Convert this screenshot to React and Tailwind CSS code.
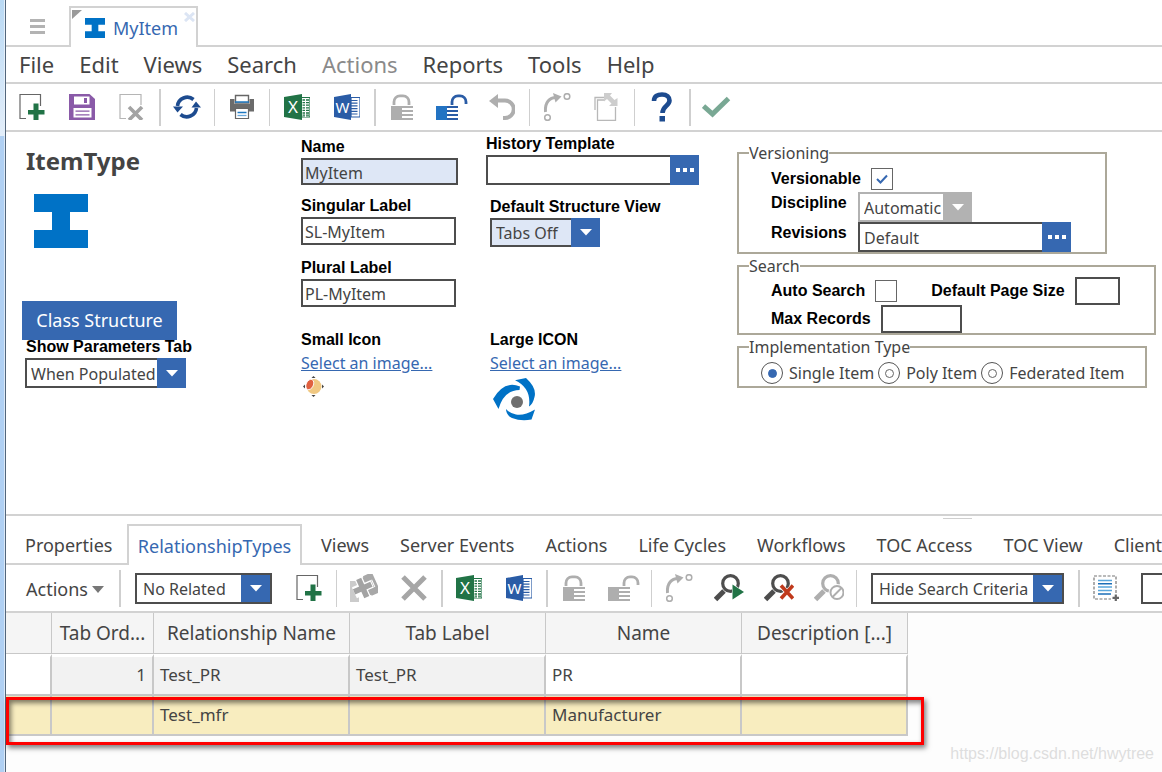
import React from "react";

const GREY = "#aeaeae";

function Svg({ children, className = "size-[26px]", box = "0 0 26 26" }) {
  return (
    <svg viewBox={box} className={className} fill="none" aria-hidden="true">
      {children}
    </svg>
  );
}

const NewIcon = () => (
  <Svg>
    <path d="M7 24.5H1V.5H21.500V12" stroke="#666" strokeWidth="1.200" />
    <path d="M13.500 11.500H18.500V18H24.500V22.500H18.500V28H13.500V22.500H8V18H13.500Z" fill="#217346" transform="translate(1 -2)" />
  </Svg>
);

const SaveIcon = () => (
  <Svg>
    <path d="M0 0H20.500L26 5V26H0Z" fill="#8a5aa8" />
    <path d="M5 2.500H20.500V10.500H5Z" fill="#fff" />
    <path d="M15 4H18V9H15Z" fill="#8a5aa8" />
    <path d="M4.500 14H22.500V23.500H4.500Z" fill="#fff" />
    <path d="M6.500 17.200H20.500M6.500 20.800H20.500" stroke="#8a5aa8" strokeWidth="1.200" />
  </Svg>
);

const DeleteIcon = () => (
  <Svg>
    <path d="M7 24.500H1V.5H22V11" stroke="#b5b5b5" strokeWidth="1.200" />
    <path d="M10 13L23 26M23 13L10 26" stroke="#a3a3a3" strokeWidth="3.600" />
  </Svg>
);

const RefreshIcon = () => (
  <Svg className="size-[28px]" box="0 0 28 28">
    <path d="M4.500 13A9.800 9.800 0 0 1 20.500 6.500M23.500 15A9.800 9.800 0 0 1 7.500 21.500" stroke="#1d4b8f" strokeWidth="3.600" />
    <path d="M0 13.500H10L4.500 19.500ZM18.500 14.500H28L23 8.500Z" fill="#1d4b8f" />
  </Svg>
);

const PrintIcon = () => (
  <Svg>
    <path d="M6.500 1.500H19.500V9H6.500Z" fill="#fff" stroke="#666" strokeWidth="1.400" />
    <path d="M1 5H5.500V10H20.500V5H25V17.500H20V14.500H6V17.500H1Z" fill="#6b6b6b" />
    <path d="M6 8H20" stroke="#1d77c0" strokeWidth="1.500" />
    <path d="M6.500 14.500H19.500V24.500H6.500Z" fill="#fff" stroke="#666" strokeWidth="1.200" />
    <path d="M8.500 18.500H17.500" stroke="#1d77c0" strokeWidth="1.500" />
    <path d="M8.500 21.500H17.500" stroke="#6aa9dc" strokeWidth="1.300" />
  </Svg>
);

const ExcelIcon = () => (
  <Svg>
    <path d="M17 3.500H26V23H17Z" fill="#fff" stroke="#217346" strokeWidth="1.200" />
    <path d="M18.500 6H25M18.500 8.600H25M18.500 11.200H25M18.500 13.800H25M18.500 16.400H25M18.500 19H25M18.500 21.200H25" stroke="#217346" strokeWidth="1.300" />
    <path d="M21.500 4V23" stroke="#fff" strokeWidth="1" />
    <path d="M0 3L18 0V26L0 23Z" fill="#217346" />
    <text x="9" y="19" textAnchor="middle" fontFamily="Noto Sans, sans-serif" fontSize="17" fill="#fff">X</text>
  </Svg>
);

const WordIcon = () => (
  <Svg>
    <path d="M17 3.500H26V23H17Z" fill="#fff" stroke="#2a5ca6" strokeWidth="1.200" />
    <path d="M17 6.500H23.500M17 9.200H23.500M17 11.900H23.500M17 14.600H23.500M17 17.300H23.500M17 20H23.500" stroke="#2a5ca6" strokeWidth="1.200" />
    <path d="M0 3L17 0V26L0 23Z" fill="#2a5ca6" />
    <text x="8.500" y="18.500" textAnchor="middle" fontFamily="Noto Sans, sans-serif" fontSize="15" fill="#fff">W</text>
  </Svg>
);

const LockIcon = () => (
  <Svg>
    <path d="M5 11V8A6 6 0 0 1 11 1.800H14A6 6 0 0 1 20 8V11" stroke={GREY} strokeWidth="2.800" />
    <path d="M2 12H13V26H2Z" fill={GREY} />
    <path d="M12 13H24M12 17H24M12 21H24M12 25H24" stroke={GREY} strokeWidth="2" />
  </Svg>
);

const UnlockIcon = ({ body = GREY, bar = GREY }) => (
  <Svg className="w-[32px] h-[26px]" box="0 0 32 26">
    <path d="M16 11V8A6 6 0 0 1 22 1.800H24A6 6 0 0 1 30 8V10" stroke={bar} strokeWidth="2.800" />
    <path d="M0 12H11V26H0Z" fill={body} />
    <path d="M11 13H22M11 17H22M11 21H22M11 25H22" stroke={bar} strokeWidth="2" />
  </Svg>
);

const UndoIcon = () => (
  <Svg>
    <path d="M5 6.500H16A8 8 0 0 1 16 24H14" stroke={GREY} strokeWidth="4" />
    <path d="M0 7L9 0V14Z" fill={GREY} />
  </Svg>
);

const PromoteIcon = () => (
  <Svg className="size-[28px]" box="0 0 28 28">
    <path d="M2.500 19C1.500 9 7 4.500 13 4.500" stroke={GREY} strokeWidth="3" />
    <path d="M10 0L18.500 3.500L12.500 9.500Z" fill={GREY} />
    <circle cx="24" cy="3.500" r="2.800" stroke={GREY} strokeWidth="1.500" />
    <circle cx="4.500" cy="24.500" r="2.800" stroke={GREY} strokeWidth="1.500" />
  </Svg>
);

const CopyIcon = () => (
  <Svg className="w-[26px] h-[28px]" box="0 0 26 28">
    <path d="M1 17V4.500H12" stroke="#b8b8b8" strokeWidth="1.300" />
    <path d="M11 7H3.500V27.500H21.500V14" stroke="#b8b8b8" strokeWidth="1.300" />
    <path d="M10 0H18L16 2.500L20.500 7L23.500 5V13H15L17.500 10.500L13 6L10 8.500Z" fill="#cdcdcd" />
  </Svg>
);

const HelpIcon = () => (
  <Svg className="w-[22px] h-[30px]" box="0 0 22 30">
    <path d="M3 9C3 4 6.500 2.500 11 2.500C16 2.500 18.500 5 18.500 8.500C18.500 14 11.500 13.500 11.500 21" stroke="#1d4b8f" strokeWidth="4.600" />
    <path d="M8.500 24H14V29.500H8.500Z" fill="#1d4b8f" />
  </Svg>
);

const CheckIcon = () => (
  <Svg className="w-[30px] h-[24px]" box="0 0 30 24">
    <path d="M1.500 11L10.500 19L26.500 3.500" stroke="#79a894" strokeWidth="5" />
  </Svg>
);

const CrossIcon = () => (
  <Svg>
    <path d="M2 2L24 24M24 2L2 24" stroke="#a6a6a6" strokeWidth="5" />
  </Svg>
);

const PickIcon = () => (
  <Svg className="size-[28px]" box="0 0 28 28">
    <path d="M0 7H9V28H0Z" fill="#cbcbcb" />
    <g transform="rotate(-24 15 13)">
      <path d="M3 8H10V3H26V23H9V20H3Z" fill="#fff" />
      <path d="M15 3.500H26V22.500H15Z" fill="#a8a8a8" />
      <path d="M12.500 2V24M3 13H23" stroke="#fff" strokeWidth="8" />
      <path d="M12.500 3V23M3 13H22" stroke="#a3a3a3" strokeWidth="5.500" />
      <path d="M17.500 3.500H26V22.500H17.500" stroke="#a8a8a8" strokeWidth="2.500" />
      <path d="M24 9V17" stroke="#fff" strokeWidth="1" />
    </g>
  </Svg>
);

const Magnifier = ({ color, children }) => (
  <Svg className="w-[30px] h-[28px]" box="0 0 30 28">
    <path d="M1.500 25.500L10 17" stroke={color} strokeWidth="5" />
    <circle cx="16.500" cy="9.500" r="7.800" stroke={color} strokeWidth="3.200" fill="#fff" />
    {children}
  </Svg>
);

const RunSearchIcon = () => (
  <Magnifier color="#4d4d4d">
    <path d="M18 9L31 18.500L18 27Z" fill="#fff" />
    <path d="M18.500 10.500L30 18L18.500 25.500Z" fill="#217346" />
  </Magnifier>
);

const ClearSearchIcon = () => (
  <Magnifier color="#4d4d4d">
    <path d="M16 11L30 25M30 11L16 25" stroke="#fff" strokeWidth="5" />
    <path d="M17 11.500L29 24.500M29 11.500L17 24.500" stroke="#c0391b" strokeWidth="3.600" />
  </Magnifier>
);

const StopSearchIcon = () => (
  <Magnifier color={GREY}>
    <circle cx="23" cy="18.500" r="8.500" fill="#fff" />
    <circle cx="23" cy="18.500" r="6.500" stroke={GREY} strokeWidth="2" />
    <path d="M18.500 23L27.500 14" stroke={GREY} strokeWidth="2" />
  </Magnifier>
);

const SelectRowsIcon = () => (
  <Svg>
    <path d="M1 1H23V24H1Z" stroke="#777" strokeWidth="1.200" strokeDasharray="3 1.500" />
    <path d="M5 5.500H19M5 12H19M5 15.500H19" stroke="#5aa7dc" strokeWidth="1.600" />
    <path d="M5 8.700H19M5 19H19" stroke="#1d6fb8" strokeWidth="1.400" />
    <path d="M18 18H26V26H18Z" fill="#fff" />
    <path d="M22.800 19.500V26M19.500 22.800H26" stroke="#666" strokeWidth="2.200" />
  </Svg>
);

const ItemGlyph = ({ className }) => (
  <svg viewBox="0 0 54 54" className={className} aria-hidden="true">
    <path d="M0 0H54V18H36V36H54V54H0V36H18V18H0Z" fill="#0072c6" />
  </svg>
);

const SwirlIcon = () => (
  <svg viewBox="0 0 43 43" className="mt-[5px] ml-[3px] size-[43px]" aria-hidden="true">
    <g fill="#0072c6">
      <path d="M22 2.300L33 0Q44 10 41.500 19Q40 26 36 28.500Q38.500 10 22 2.300Z" />
      <path d="M0 21Q11 2 27 8.500L26.500 12Q11 12 5.500 31Z" />
      <path d="M13 31Q13 37 19 40Q28 43.500 38.500 41.500L42 31.500Q31 38 23 36.500Q16 35 13 31Z" />
    </g>
    <circle cx="24" cy="24" r="6" fill="#6f6f6f" />
  </svg>
);

const BallIcon = () => (
  <svg viewBox="0 0 21 21" className="mt-[3px] ml-0.5 size-[21px]" aria-hidden="true">
    <circle cx="11" cy="10.500" r="7.500" fill="#f0c882" />
    <ellipse cx="6.800" cy="8.500" rx="3.600" ry="5.400" transform="rotate(25 6.800 8.500)" fill="#e0603f" stroke="#fff" strokeWidth=".8" />
    <path d="M0 10.500L2 8.500V12.500ZM21 10.500L19 8.500V12.500ZM10.500 0L12.500 2H8.500ZM10.500 21L12.500 19H8.500Z" fill="#444" />
  </svg>
);

function Tool({ label, children }) {
  return (
    <button type="button" aria-label={label} className="flex h-full w-[50px] shrink-0 items-center justify-center">
      {children}
    </button>
  );
}

const Sep = () => <div className="mx-0.5 h-[37px] w-px shrink-0 bg-[#cfcfcf]" />;
const WideSep = () => <div className="mr-px ml-0.5 h-[37px] w-0.5 shrink-0 bg-[#cfcfcf]" />;

function Select({ label, id, value, className = "", box = "border-[#4d4d4d] bg-white", arrow = "bg-[#3668b1]", disabled = false, inset = false }) {
  return (
    <div className={`grid shrink-0 ${className}`}>
      <select
        id={id}
        aria-label={label}
        disabled={disabled}
        defaultValue={value}
        className={`col-start-1 row-start-1 w-full appearance-none border-2 pt-px text-[16px] leading-5 text-[#444] opacity-100 ${inset ? "pl-1.5" : "pl-1"} ${box}`}
      >
        <option>{value}</option>
      </select>
      <div className={`pointer-events-none col-start-1 row-start-1 flex w-[29px] items-center justify-center justify-self-end ${arrow} ${inset ? "my-0.5 mr-0.5" : ""}`}>
        <svg viewBox="0 0 12 7" className="h-[7px] w-3" aria-hidden="true">
          <path d="M0 0H12L6 6.500Z" fill="#fff" />
        </svg>
      </div>
    </div>
  );
}

function Picker({ id, label, value, className }) {
  return (
    <div className={`flex ${className}`}>
      <input id={id} defaultValue={value} className="min-w-0 flex-1 border-2 border-r-0 border-[#4d4d4d] px-1 pt-0.5 text-[16px] text-[#444] outline-none" />
      <button type="button" aria-label={label} className="flex w-[29px] items-center justify-center gap-[3px] bg-[#3668b1]">
        <span className="size-1 bg-white" />
        <span className="size-1 bg-white" />
        <span className="size-1 bg-white" />
      </button>
    </div>
  );
}

function Label({ htmlFor, className = "", children }) {
  return (
    <label htmlFor={htmlFor} className={`block font-['Liberation_Sans',sans-serif] text-[16px] leading-[22px] font-bold whitespace-nowrap text-black ${className}`}>
      {children}
    </label>
  );
}

const TEXT_BOX = "border-2 border-[#4d4d4d] px-0.5 pt-0.5 text-[16px] text-[#444] outline-none";
const FIELDSET = "border-2 border-[#aca899] pl-2.5";

function Check({ id, checked }) {
  return (
    <span className="grid size-[22px] shrink-0 place-items-center">
      <input id={id} type="checkbox" defaultChecked={checked} className="peer col-start-1 row-start-1 size-[22px] appearance-none border border-[#666] bg-white" />
      <svg viewBox="0 0 12 10" className="pointer-events-none col-start-1 row-start-1 hidden h-2.5 w-3 peer-checked:block" aria-hidden="true">
        <path d="M1 5L4.500 8.500L11 1.500" fill="none" stroke="#3668b1" strokeWidth="2" />
      </svg>
    </span>
  );
}

function Radio({ label, checked }) {
  return (
    <label className="flex items-center gap-1.5 text-[16px] leading-5 whitespace-nowrap">
      <span className="grid size-[22px] place-items-center">
        <input type="radio" name="implementation" defaultChecked={checked} className="peer col-start-1 row-start-1 size-[22px] appearance-none rounded-full border border-[#555] bg-white" />
        <span className="pointer-events-none col-start-1 row-start-1 size-[9px] rounded-full border border-[#666] peer-checked:border-[#3668b1] peer-checked:bg-[#3668b1]" />
      </span>
      {label}
    </label>
  );
}

const MENU = ["File", "Edit", "Views", "Search", "Actions", "Reports", "Tools", "Help"];
const LATER_TABS = ["Views", "Server Events", "Actions", "Life Cycles", "Workflows", "TOC Access", "TOC View", "Client"];

const HEAD = "h-[41px] border-r border-b border-[#c8c8c8] bg-[#f5f5f5] px-1 py-0 text-center text-[19px] leading-6 font-normal whitespace-nowrap";
const ROW_A = "h-[42px] border-t-[3px] border-r-2 border-b-2 border-t-white border-r-[#c8c8c8] border-b-[#c8c8c8] px-1.5 pt-0 pb-0.5";
const ROW_B = "h-10 border-r-2 border-b-2 border-[#c8c8c8] bg-[#f8edbf] px-1.5 py-0";

export default function App() {
  return (
    <div className="flex min-h-screen overflow-hidden bg-white font-['Noto_Sans',sans-serif] text-[#444]">
      <div className="flex w-1.5 shrink-0 flex-col border-r border-[#52667c]">
        <div className="h-[136px] border-r border-[#e6f0fa] bg-linear-to-b from-[#b9d9f4] to-[#e3eefa]" />
        <div className="flex-1 border-r border-[#dbe9f8] bg-[#b0d0f3]" />
      </div>
      <main className="flex min-w-0 flex-1 flex-col">
        <div className="flex h-[47px]">
          <div className="flex w-[63px] justify-center border-b-2 border-[#d2d2d2] pt-2">
            <button type="button" aria-label="Menu" className="flex flex-col justify-center gap-[3px]">
              <span className="h-[3px] w-[15px] bg-[#b3b3b3]" />
              <span className="h-[3px] w-[15px] bg-[#b3b3b3]" />
              <span className="h-[3px] w-[15px] bg-[#b3b3b3]" />
            </button>
          </div>
          <div className="mt-1.5 flex w-[129px] border-2 border-b-0 border-[#d2d2d2]">
            <svg viewBox="0 0 10 9" className="mt-0.5 ml-px h-[9px] w-2.5" aria-hidden="true">
              <path d="M0 0H10L0 9Z" fill="#9a9a9a" />
            </svg>
            <ItemGlyph className="mt-2.5 ml-[3px] size-5" />
            <a href="#item" className="ml-2 flex-1 pt-1.5 text-[18px] leading-7 text-[#3668b1]">MyItem</a>
            <button type="button" aria-label="Close tab" className="mt-1 mr-px h-2.5">
              <svg viewBox="0 0 11 10" className="h-2.5 w-[11px]" aria-hidden="true">
                <path d="M1 1L10 9M10 1L1 9" stroke="#dce5f4" strokeWidth="3" />
              </svg>
            </button>
          </div>
          <div className="flex-1 border-b-2 border-[#d2d2d2]" />
        </div>

        <nav className="flex h-[37px] items-center gap-[25px] border-b-2 border-[#d2d2d2] pb-0.5 pl-[13px]">
          {MENU.map((m) => (
            <button key={m} type="button" className={`text-[22px] leading-8 ${m === "Actions" ? "text-[#8a8a8a]" : ""}`}>
              {m}
            </button>
          ))}
        </nav>

        <div className="flex h-12 shrink-0 items-center border-b-2 border-[#d2d2d2] pl-px">
          <Tool label="New"><NewIcon /></Tool>
          <Tool label="Save"><SaveIcon /></Tool>
          <Tool label="Delete"><DeleteIcon /></Tool>
          <WideSep />
          <Tool label="Refresh"><RefreshIcon /></Tool>
          <Sep />
          <Tool label="Print"><PrintIcon /></Tool>
          <Sep />
          <Tool label="Export to Excel"><ExcelIcon /></Tool>
          <Tool label="Export to Word"><WordIcon /></Tool>
          <WideSep />
          <Tool label="Lock"><LockIcon /></Tool>
          <Tool label="Unlock"><UnlockIcon body="#2373c3" bar="#2a5ca6" /></Tool>
          <Tool label="Undo"><UndoIcon /></Tool>
          <Sep />
          <Tool label="Promote"><PromoteIcon /></Tool>
          <Tool label="Copy"><CopyIcon /></Tool>
          <Sep />
          <Tool label="Help"><HelpIcon /></Tool>
          <WideSep />
          <Tool label="Done"><CheckIcon /></Tool>
        </div>

        <form className="flex h-[382px] pl-4">
          <section className="w-[279px] shrink-0 pt-[15px]">
            <h1 className="pl-1 text-[24px] leading-7 font-bold">ItemType</h1>
            <ItemGlyph className="mt-[19px] ml-3 size-[54px]" />
            <button type="button" className="relative mt-[53px] block h-[39px] w-[155px] bg-[#3668b1] text-[18px] text-white">
              Class Structure
            </button>
            <Label htmlFor="params" className="-mt-1 pl-1">Show Parameters Tab</Label>
            <Select id="params" value="When Populated" className="ml-[3px] h-[30px] w-[161px]" />
          </section>

          <section className="w-[184px] shrink-0 pt-1">
            <Label htmlFor="name">Name</Label>
            <input id="name" defaultValue="MyItem" className={`${TEXT_BOX} block h-[27px] w-[157px] bg-[#dee7f6]`} />
            <Label htmlFor="singular" className="mt-2.5">Singular Label</Label>
            <input id="singular" defaultValue="SL-MyItem" className={`${TEXT_BOX} block h-7 w-[155px]`} />
            <Label htmlFor="plural" className="mt-3">Plural Label</Label>
            <input id="plural" defaultValue="PL-MyItem" className={`${TEXT_BOX} block h-7 w-[155px]`} />
            <div className="mt-[22px] font-['Liberation_Sans',sans-serif] text-[16px] leading-[22px] font-bold text-black">Small Icon</div>
            <a href="#small" className="mt-0.5 block text-[16px] leading-5 text-[#3668b1] underline">Select an image...</a>
            <BallIcon />
          </section>

          <section className="w-[252px] shrink-0 pt-px pl-px">
            <Label htmlFor="history">History Template</Label>
            <Picker id="history" label="Choose history template" value="" className="h-[30px] w-[213px]" />
            <div className="pl-1">
              <Label htmlFor="view" className="mt-[11px]">Default Structure View</Label>
              <Select id="view" value="Tabs Off" className="h-[29px] w-[110px]" box="border-[#4d4d4d] bg-[#dee7f6]" />
              <div className="mt-[82px] font-['Liberation_Sans',sans-serif] text-[16px] leading-[22px] font-bold text-black">Large ICON</div>
              <a href="#large" className="mt-0.5 block text-[16px] leading-5 text-[#3668b1] underline">Select an image...</a>
              <SwirlIcon />
            </div>
          </section>

          <section className="flex shrink-0 flex-col items-start gap-0.5 pt-[11px]">
            <fieldset className={`${FIELDSET} h-[111px] w-[370px]`}>
              <legend className="text-[16px] leading-5">Versioning</legend>
              <div className="flex items-center gap-2.5 pt-[5px] pl-[22px]">
                <Label htmlFor="versionable">Versionable</Label>
                <Check id="versionable" checked />
              </div>
              <div className="mt-0.5 flex items-start pl-[22px]">
                <Label htmlFor="discipline" className="w-[87px]">Discipline</Label>
                <Select id="discipline" value="Automatic" disabled className="h-[30px] w-[114px]" box="border-[#b2b2b2] bg-white" arrow="bg-[#b2b2b2]" />
              </div>
              <div className="flex items-start pl-[22px]">
                <Label htmlFor="revisions" className="w-[87px]">Revisions</Label>
                <Picker id="revisions" label="Choose revision" value="Default" className="h-[30px] w-[213px]" />
              </div>
            </fieldset>
            <fieldset className={`${FIELDSET} h-[79px] w-[419px]`}>
              <legend className="text-[16px] leading-5">Search</legend>
              <div className="flex items-center gap-2.5 pt-px pl-[22px]">
                <Label htmlFor="auto">Auto Search</Label>
                <Check id="auto" checked={false} />
                <Label htmlFor="pagesize" className="ml-6">Default Page Size</Label>
                <input id="pagesize" className={`${TEXT_BOX} h-7 w-[45px]`} />
              </div>
              <div className="flex items-center gap-2.5 pl-[22px]">
                <Label htmlFor="maxrecords">Max Records</Label>
                <input id="maxrecords" className={`${TEXT_BOX} h-7 w-[81px]`} />
              </div>
            </fieldset>
            <fieldset className={`${FIELDSET} h-[51px] w-[410px]`}>
              <legend className="text-[16px] leading-5">Implementation Type</legend>
              <div className="flex items-center gap-1 pt-[5px] pl-3">
                <Radio label="Single Item" checked />
                <Radio label="Poly Item" />
                <Radio label="Federated Item" />
              </div>
            </fieldset>
          </section>
        </form>

        <div className="flex h-2.5 shrink-0 justify-end border-t-2 border-[#d2d2d2] pr-[190px]">
          <div className="mt-0.5 h-px w-[29px] bg-[#cfcfcf]" />
        </div>

        <div className="flex h-[41px] shrink-0 text-[18px] leading-6 whitespace-nowrap">
          <div className="flex w-[121px] shrink-0 items-center border-b-2 border-[#d2d2d2] pt-0.5 pl-[19px]">
            <button type="button">Properties</button>
          </div>
          <div className="flex w-[175px] shrink-0 items-center justify-center border-2 border-b-0 border-[#d2d2d2] text-[#3668b1]">
            <button type="button">RelationshipTypes</button>
          </div>
          <div className="flex min-w-0 flex-1 items-center gap-[31px] border-b-2 border-[#d2d2d2] pt-0.5 pl-[19px]">
            {LATER_TABS.map((t) => (
              <button key={t} type="button" className="shrink-0">{t}</button>
            ))}
          </div>
        </div>

        <div className="flex h-12 shrink-0 items-center overflow-hidden border-b-2 border-[#d2d2d2] pl-5">
          <button type="button" className="flex w-[91px] shrink-0 items-center gap-1 pt-0.5 text-[18px] leading-6">
            Actions
            <svg viewBox="0 0 12 7" className="h-[7px] w-3" aria-hidden="true">
              <path d="M0 0H12L6 7Z" fill="#777" />
            </svg>
          </button>
          <WideSep />
          <Select label="Related" value="No Related" className="ml-[13px] h-[31px] w-[137px]" inset />
          <div className="w-3 shrink-0" />
          <Tool label="New relationship"><NewIcon /></Tool>
          <Sep />
          <Tool label="Pick related"><PickIcon /></Tool>
          <Tool label="Remove"><CrossIcon /></Tool>
          <WideSep />
          <Tool label="Export to Excel"><ExcelIcon /></Tool>
          <Tool label="Export to Word"><WordIcon /></Tool>
          <WideSep />
          <Tool label="Lock"><LockIcon /></Tool>
          <Tool label="Unlock"><UnlockIcon /></Tool>
          <Sep />
          <Tool label="Promote"><PromoteIcon /></Tool>
          <Tool label="Run search"><RunSearchIcon /></Tool>
          <Tool label="Clear search"><ClearSearchIcon /></Tool>
          <Tool label="Stop search"><StopSearchIcon /></Tool>
          <Sep />
          <Select label="Search criteria" value="Hide Search Criteria" className="ml-3 h-[31px] w-[193px]" inset />
          <div className="w-3 shrink-0" />
          <WideSep />
          <Tool label="Select rows"><SelectRowsIcon /></Tool>
          <input aria-label="Page size" className={`${TEXT_BOX} ml-2.5 h-[31px] w-20 shrink-0`} />
        </div>

        <div className="relative flex flex-1 flex-col bg-[#fdfdfd]">
          <table className="w-[902px] table-fixed border-separate border-spacing-0 bg-white text-[17px] leading-6">
            <colgroup>
              <col className="w-[46px]" />
              <col className="w-[102px]" />
              <col className="w-[196px]" />
              <col className="w-[196px]" />
              <col className="w-[196px]" />
              <col className="w-[166px]" />
            </colgroup>
            <thead>
              <tr>
                <th className={HEAD} aria-label="Row" />
                <th className={HEAD}>Tab Ord...</th>
                <th className={HEAD}>Relationship Name</th>
                <th className={HEAD}>Tab Label</th>
                <th className={HEAD}>Name</th>
                <th className={HEAD}>Description [...]</th>
              </tr>
            </thead>
            <tbody>
              <tr>
                <td className={ROW_A} />
                <td className={`${ROW_A} bg-[#f2f2f2] text-right`}>1</td>
                <td className={`${ROW_A} bg-[#f2f2f2]`}>Test_PR</td>
                <td className={`${ROW_A} bg-[#f2f2f2]`}>Test_PR</td>
                <td className={ROW_A}>PR</td>
                <td className={ROW_A} />
              </tr>
              <tr>
                <td className={ROW_B} />
                <td className={ROW_B} />
                <td className={ROW_B}>Test_mfr</td>
                <td className={ROW_B} />
                <td className={ROW_B}>Manufacturer</td>
                <td className={ROW_B} />
              </tr>
            </tbody>
          </table>
          <div className="pointer-events-none absolute top-[84px] left-0 h-12 w-[918px] border-[3px] border-[#fe0000] shadow-[2px_3px_5px_rgba(0,0,0,0.5),inset_2px_3px_5px_rgba(0,0,0,0.5)]" />
          <div className="mt-auto pr-2 pb-2 text-right font-['Liberation_Sans',sans-serif] text-[16px] leading-5 text-[#dedede]">
            https://blog.csdn.net/hwytree
          </div>
        </div>
      </main>
    </div>
  );
}
